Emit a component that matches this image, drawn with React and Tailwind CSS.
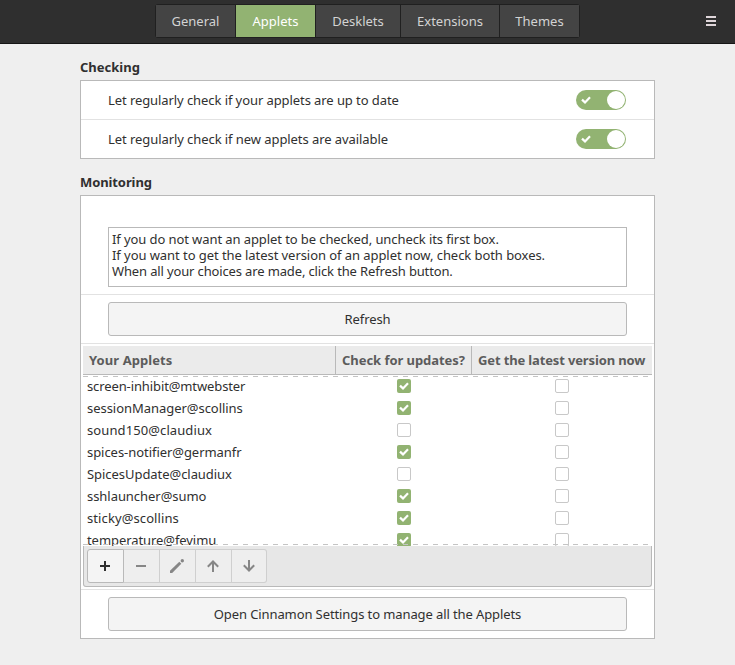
import React from "react";

const APPLETS = [
  ["screen-inhibit@mtwebster", true, "tracking-[-0.11px]"],
  ["sessionManager@scollins", true, "tracking-[-0.04px]"],
  ["sound150@claudiux", false, "tracking-[0.1px]"],
  ["spices-notifier@germanfr", true, "tracking-[-0.05px]"],
  ["SpicesUpdate@claudiux", false, "tracking-[-0.05px]"],
  ["sshlauncher@sumo", true, "tracking-[-0.05px]"],
  ["sticky@scollins", true, "tracking-[0.1px]"],
  ["temperature@fevimu", true, "tracking-[-0.07px]"],
];

function Tick({ className }) {
  return (
    <svg viewBox="0 0 10 8" className={className} fill="none" stroke="#fff" strokeWidth="2.2">
      <path d="M1 3.6 4 6.4 9 1.2" />
    </svg>
  );
}

function Switch() {
  return (
    <div className="flex h-5 w-[50px] items-center justify-between rounded-full bg-[#92b372] pr-px pl-[5px]">
      <Tick className="h-2 w-2.5" />
      <div className="size-[18px] rounded-full bg-white" />
    </div>
  );
}

function Check({ on }) {
  return on ? (
    <div className="flex size-3.5 items-center justify-center rounded-xs bg-[#92b372]">
      <Tick className="h-2 w-2.5" />
    </div>
  ) : (
    <div className="size-3.5 rounded-xs border border-[#c8c8c8] bg-white" />
  );
}

function Tab({ width, active, children }) {
  return (
    <div className={`flex h-8 items-center justify-center ${width} ${active ? "bg-[#92b372] text-white" : "bg-[#444444] text-[#d3d3d3]"}`}>
      {children}
    </div>
  );
}

function WideButton({ children }) {
  return (
    <div className="mx-[27px] flex h-[34px] items-center justify-center rounded-[3px] border border-[#b9b9b9] bg-[#f4f4f4] tracking-[-0.1px]">
      {children}
    </div>
  );
}

function Dashes() {
  return <div className="h-px w-[569px] bg-[repeating-linear-gradient(90deg,#c4c4c4_0_5px,transparent_5px_10px)]" />;
}

export default function App() {
  return (
    <div className="h-[665px] w-[735px] overflow-hidden bg-[#efefef] font-['Noto_Sans',sans-serif] text-[13px] leading-4 whitespace-nowrap text-[#303030]">
      <header className="flex h-11 items-start justify-between border-b border-[#161616] bg-[#2f2f2f] pt-1 pr-[19px] pl-[155px]">
        <nav className="flex gap-px rounded-[3px] border border-[#202020] bg-[#202020]">
          <Tab width="w-[79px]">General</Tab>
          <Tab width="w-[79px]" active>Applets</Tab>
          <Tab width="w-[84px]">Desklets</Tab>
          <Tab width="w-[98px]">Extensions</Tab>
          <Tab width="w-[79px]">Themes</Tab>
        </nav>
        <div className="flex flex-col gap-0.5 pt-3">
          <div className="h-0.5 w-2.5 bg-[#dfd6da]" />
          <div className="h-0.5 w-2.5 bg-[#dfd6da]" />
          <div className="h-0.5 w-2.5 bg-[#dfd6da]" />
        </div>
      </header>

      <main className="ml-20 w-[575px] pt-[15px]">
        <h2 className="h-[21px] font-bold">Checking</h2>
        <section className="border border-[#b9b9b9] bg-white">
          <div className="flex h-[39px] items-center justify-between border-b border-[#e2e2e2] pr-7 pl-[27px]">
            <span className="tracking-[-0.08px]">Let regularly check if your applets are up to date</span>
            <Switch />
          </div>
          <div className="flex h-[38px] items-center justify-between pr-7 pl-[27px]">
            <span className="tracking-[-0.07px]">Let regularly check if new applets are available</span>
            <Switch />
          </div>
        </section>

        <h2 className="mt-[15px] h-[21px] font-bold tracking-[-0.1px]">Monitoring</h2>
        <section className="h-[444px] border border-[#b9b9b9] bg-white">
          <div className="h-[99px] border-b border-[#e2e2e2] pt-[31px]">
            <div className="mx-[27px] h-[60px] border border-[#b9b9b9] px-[3px] pt-[3px]">
              <p className="tracking-[-0.09px]">If you do not want an applet to be checked, uncheck its first box.</p>
              <p className="tracking-[-0.065px]">If you want to get the latest version of an applet now, check both boxes.</p>
              <p className="tracking-[-0.14px]">When all your choices are made, click the Refresh button.</p>
            </div>
          </div>
          <div className="h-[49px] border-b border-[#e2e2e2] pt-[7px]">
            <WideButton>Refresh</WideButton>
          </div>
          <div className="h-[246px] border-b border-[#e2e2e2] px-0.5 pt-0.5">
            <div className="flex h-[29px] w-[569px] border-b border-[#b9b9b9] bg-[#ebebeb] font-bold text-[#5c5c5c]">
              <div className="flex w-[253px] items-center border-r border-[#b9b9b9] pl-1.5 tracking-[0.08px]">Your Applets</div>
              <div className="flex w-[136px] items-center border-r border-[#b9b9b9] pl-1.5 tracking-[-0.05px]">Check for updates?</div>
              <div className="flex items-center pl-1.5 tracking-[-0.14px]">Get the latest version now</div>
            </div>
            <div className="relative h-[171px] overflow-hidden">
              {APPLETS.map(([name, on, tracking]) => (
                <div key={name} className="flex h-[22px] items-center">
                  <span className={`w-[314px] pl-1 ${tracking}`}>{name}</span>
                  <Check on={on} />
                  <div className="w-36" />
                  <Check />
                </div>
              ))}
              <div className="absolute top-px left-0"><Dashes /></div>
              <div className="absolute bottom-px left-0"><Dashes /></div>
            </div>
            <div className="h-[41px] w-[569px] rounded-b-[3px] border-x border-b border-[#b9b9b9] bg-[#e7e7e7] pt-[3px] pl-[3px]">
              <div className="flex h-[34px] w-[180px] text-[#868686]">
                <div className="flex w-[37px] items-center justify-center rounded-l-[3px] border border-[#b9b9b9] bg-[#f4f4f4] pr-px text-[#303030]">
                  <svg className="size-4" viewBox="0 0 16 16" fill="none" stroke="currentColor" strokeWidth="2"><path d="M3 8H13M8 3V13" /></svg>
                </div>
                <div className="flex w-9 items-center justify-center border-y border-r border-[#cfcfcf] bg-[#eeeeee] pr-px">
                  <svg className="size-4" viewBox="0 0 16 16" fill="none" stroke="currentColor" strokeWidth="2"><path d="M3 8H13" /></svg>
                </div>
                <div className="flex w-9 items-center justify-center border-y border-r border-[#cfcfcf] bg-[#eeeeee] pr-px">
                  <svg className="size-4" viewBox="0 0 16 16" fill="currentColor"><path d="M1 15V12.800L10.300 3.700 12.300 5.700 3.200 15Z" /><circle cx="13.300" cy="2.700" r="1.700" /></svg>
                </div>
                <div className="flex w-9 items-center justify-center border-y border-r border-[#cfcfcf] bg-[#eeeeee] pr-px">
                  <svg className="size-4" viewBox="0 0 16 16" fill="none" stroke="currentColor" strokeWidth="2"><path d="M8 14V3.500M2.800 8.700 8 3.500 13.200 8.700" /></svg>
                </div>
                <div className="flex w-[35px] items-center justify-center rounded-r-[3px] border-y border-r border-[#cfcfcf] bg-[#eeeeee]">
                  <svg className="size-4" viewBox="0 0 16 16" fill="none" stroke="currentColor" strokeWidth="2"><path d="M8 2V12.500M2.800 7.300 8 12.500 13.200 7.300" /></svg>
                </div>
              </div>
            </div>
          </div>
          <div className="pt-[7px]">
            <WideButton>Open Cinnamon Settings to manage all the Applets</WideButton>
          </div>
        </section>
      </main>
    </div>
  );
}
